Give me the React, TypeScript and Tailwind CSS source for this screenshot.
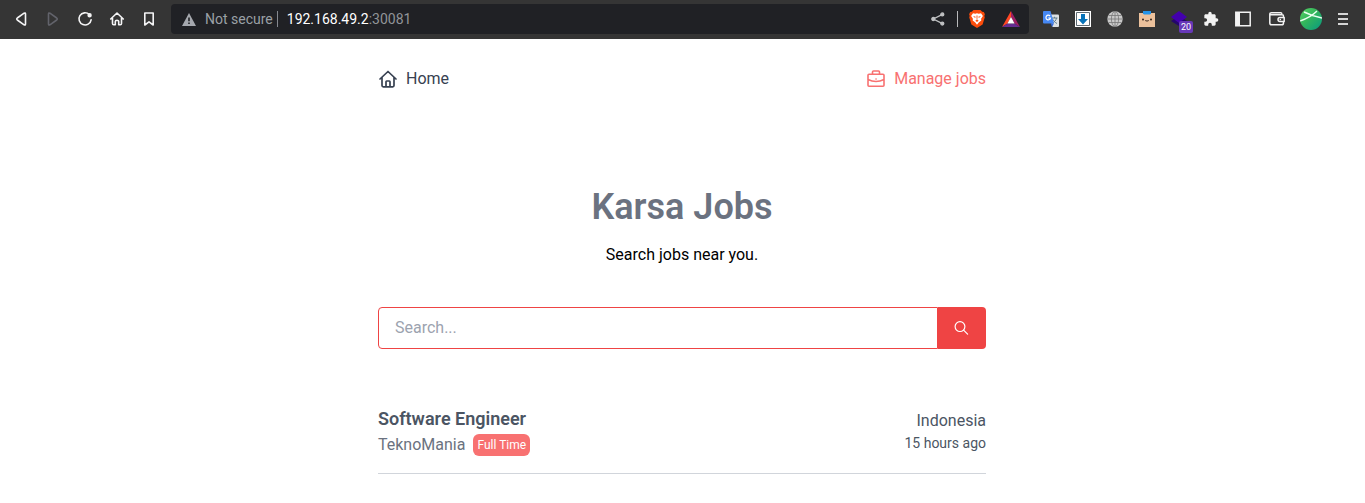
import React from "react";

const stroke = {
  fill: "none",
  stroke: "currentColor",
  strokeLinecap: "round",
  strokeLinejoin: "round",
} as const;

function NavButton({ label, dim, children }: { label: string; dim?: boolean; children: React.ReactNode }) {
  return (
    <button aria-label={label} className={dim ? "text-[#62636b]" : "text-[#f4f4f5]"}>
      <svg viewBox="0 0 16 16" className="size-4" strokeWidth="1.6" {...stroke}>
        {children}
      </svg>
    </button>
  );
}

function BraveIcon() {
  return (
    <svg viewBox="0 0 16 18" className="h-[18px] w-4">
      <path d="M4.500 0h7l1.700 1.800 1.600.2 1.100 2.300-.6 1.600.5 1.300-2.200 7.200L8 18l-5.600-3.600L.2 7.200l.5-1.300L.1 4.300 1.200 2l1.600-.2z" fill="#fb4c0b" />
      <path d="M4 3.300l2.300.5L8 3.200l1.700.6 2.300-.5 1.900 2.600-1.800 2.900.2 1.700-2.600 1.900L8 14.800l-1.700-2.400-2.600-1.900.2-1.700L2.100 5.900z" fill="#fff" />
      <path d="M4 6l2.700.7-.6 1.300zM12 6l-2.700.7.6 1.300zM7.500 5.500h1l-.2 4.200 1.400 1L8 11.900l-1.700-1.200 1.400-1z" fill="#fb4c0b" />
    </svg>
  );
}

function BatIcon() {
  return (
    <svg viewBox="0 0 18 16" className="h-4 w-[18px]">
      <path d="M9 0L0 16l5.500-3.600L9 6z" fill="#ff4724" />
      <path d="M9 0l9 16-5.500-3.600L9 6z" fill="#9e1f63" />
      <path d="M0 16h18l-5.500-3.600h-7z" fill="#662d91" />
      <path d="M9 6l3.600 6.400H5.400z" fill="#fff" />
    </svg>
  );
}

function TranslateIcon() {
  return (
    <svg viewBox="0 0 16 16" className="size-4">
      <path d="M6 3.500h9a1 1 0 011 1V15a1 1 0 01-1 1H9.500z" fill="#dce0e3" />
      <path d="M8.500 7h6M11.500 5.800V7M13.500 7c-.5 2.500-2 4-4 5M10 8.500c1 2 2.200 3 4 4" fill="none" stroke="#607d8b" />
      <path d="M1 0h6.500L11 12.500H1a1 1 0 01-1-1V1a1 1 0 011-1z" fill="#4688f4" />
      <path d="M7.800 12.500H11L9 16z" fill="#3367d6" />
      <path d="M7 5A2.300 2.300 0 107.500 7H5.300" fill="none" stroke="#fff" strokeWidth="1.200" />
    </svg>
  );
}

function DownloadIcon() {
  return (
    <svg viewBox="0 0 16 16" className="size-4">
      <path d="M0 0h16v16H0z" fill="#fff" />
      <path d="M1.500 1.500h13v13h-13z" fill="#fff" stroke="#5f6b73" />
      <path d="M6 3h4v5h3l-5 5.500L3 8h3z" fill="#0873b9" />
    </svg>
  );
}

function GlobeIcon() {
  return (
    <svg viewBox="0 0 16 16" className="size-4">
      <circle cx="8" cy="8" r="7.700" fill="#c8c8c8" />
      <g fill="none" stroke="#777" strokeWidth=".8">
        <ellipse cx="8" cy="8" rx="3.600" ry="7.500" />
        <path d="M8 .5v15M.5 8h15M1.500 4.500h13M1.500 11.500h13" />
      </g>
    </svg>
  );
}

function BoxFaceIcon() {
  return (
    <svg viewBox="0 0 16 16" className="size-4">
      <path d="M0 2h16v14H0z" fill="#ecc19c" />
      <path d="M4 0h8v2.500l-1 1H5l-1-1z" fill="#2493e8" />
      <circle cx="4" cy="8.500" r="1" fill="#30211b" />
      <circle cx="12" cy="8.500" r="1" fill="#30211b" />
      <path d="M6.300 9.500q.9 1.200 1.700 0 .8 1.200 1.700 0" fill="none" stroke="#30211b" />
    </svg>
  );
}

function LayersIcon() {
  return (
    <svg viewBox="0 0 16 16" className="size-4">
      <path d="M0 10l8-5 8 5-8 5z" fill="#24066b" />
      <path d="M0 6l8-6 8 6-8 6z" fill="#4300ad" />
    </svg>
  );
}

function AvatarIcon() {
  return (
    <svg viewBox="0 0 22 22" className="size-[22px]">
      <defs>
        <linearGradient id="avatar" x1="0" y1="0" x2="1" y2="1">
          <stop stopColor="#57d163" />
          <stop offset=".45" stopColor="#32b55c" />
          <stop offset="1" stopColor="#079981" />
        </linearGradient>
        <clipPath id="round">
          <circle cx="11" cy="11" r="11" />
        </clipPath>
      </defs>
      <g clipPath="url(#round)">
        <path d="M0 0h22v22H0z" fill="url(#avatar)" />
        <path d="M0 13C6 11 12 8 17 3M4 4c5 2.500 10 4.500 18 6" fill="none" stroke="#e9fff0" strokeWidth="1.400" />
      </g>
    </svg>
  );
}

function BrowserBar() {
  return (
    <header className="flex h-[39px] items-center bg-[#353535] pr-4 pb-px pl-[13px]">
      <div className="flex gap-4">
        <NavButton label="Back">
          <path d="M12.500 3v10q0 1.500-1.400.8L4.300 9q-1.200-1 0-2l6.800-4.800q1.400-.7 1.400.8z" />
        </NavButton>
        <NavButton label="Forward" dim>
          <path d="M3.500 3v10q0 1.500 1.400.8L11.700 9q1.200-1 0-2L4.900 2.200Q3.500 1.500 3.500 3z" />
        </NavButton>
        <NavButton label="Reload">
          <path d="M12.300 3.500A6.100 6.100 0 1014.100 8.800" />
          <circle cx="12.600" cy="4.200" r="1.400" fill="currentColor" />
        </NavButton>
        <NavButton label="Home page">
          <path d="M1.700 8L8 2l6.300 6M3.500 7v5.500q0 1.300 1.200 1.300h1.600v-3.300q0-1.200 1.700-1.200t1.700 1.200v3.300h1.600q1.200 0 1.200-1.300V7" />
        </NavButton>
        <NavButton label="Bookmark">
          <path d="M3.800 2h8.400v12L8 10.800 3.800 14z" />
        </NavButton>
      </div>

      <div className="ml-[14px] flex h-[30px] min-w-0 flex-1 items-center rounded bg-[#202125] pr-[9px] pl-[11px] text-sm">
        <svg viewBox="0 0 14 13" className="h-[13px] w-[14px] shrink-0">
          <path d="M7 0l7 13H0z" fill="#a5a8ae" />
          <path d="M6.200 4.500h1.600v3.800H6.200zm0 5h1.600v1.600H6.200z" fill="#202125" />
        </svg>
        <span className="ml-[9px] whitespace-nowrap text-[#9aa0a6]">Not secure</span>
        <span className="ml-1 h-4 w-px bg-[#85888e]" />
        <span className="ml-[9px] flex-1 text-white">
          192.168.49.2<span className="text-[#919498]">:30081</span>
        </span>
        <button aria-label="Share">
          <svg viewBox="0 0 14 14" className="h-[14px] w-[14px]" fill="#bfc0c2" stroke="#bfc0c2" strokeWidth="1.300">
            <path d="M11.500 2.300L2.300 7l9.200 4.700" fill="none" />
            <circle cx="11.300" cy="2.400" r="1.500" />
            <circle cx="2.300" cy="7" r="1.500" />
            <circle cx="11.300" cy="11.600" r="1.500" />
          </svg>
        </button>
        <span className="mr-[11px] ml-3 h-4 w-px bg-[#b8b9bb]" />
        <button aria-label="Brave Shields"><BraveIcon /></button>
        <button aria-label="Brave Rewards" className="ml-[17px]"><BatIcon /></button>
      </div>

      <div className="ml-[14px] flex items-center gap-4 text-[#f2f2f2]">
        <button aria-label="Translate"><TranslateIcon /></button>
        <button aria-label="Download manager"><DownloadIcon /></button>
        <button aria-label="Web"><GlobeIcon /></button>
        <button aria-label="Box"><BoxFaceIcon /></button>
        <button aria-label="Layers" className="relative">
          <LayersIcon />
          <span className="absolute top-[10px] left-2 rounded-xs bg-[#6738b8] px-0.5 text-[9px] leading-3 text-white">20</span>
        </button>
        <button aria-label="Extensions">
          <svg viewBox="0 0 24 24" className="size-4" fill="currentColor">
            <path d="M20.500 11H19V7c0-1.100-.9-2-2-2h-4V3.500a2.500 2.500 0 00-5 0V5H4c-1.100 0-2 .9-2 2v3.800h1.500a2.700 2.700 0 010 5.400H2V20c0 1.100.9 2 2 2h3.800v-1.500a2.700 2.700 0 015.400 0V22H17c1.100 0 2-.9 2-2v-4h1.500a2.500 2.500 0 000-5z" />
          </svg>
        </button>
        <button aria-label="Sidebar">
          <svg viewBox="0 0 16 16" className="size-4">
            <path d="M.8 1.300h14.400v13.400H.8z" fill="none" stroke="currentColor" strokeWidth="1.500" />
            <path d="M1 1.500h4v13H1z" fill="currentColor" />
          </svg>
        </button>
        <button aria-label="Wallet">
          <svg viewBox="0 0 16 16" className="ml-[2px] size-4" strokeWidth="1.500" {...stroke}>
            <path d="M14.500 5.500V5q0-1.300-1.300-1.300H2.500Q.8 3.700.8 2.700t1.700-1h9.300q1 0 1 1M.8 3v9q0 1.800 1.800 1.800h10.100q1.800 0 1.800-1.800v-.7M15.200 6.500H11a2 2 0 000 4h4.200zM11.200 8.500h.2" />
          </svg>
        </button>
        <button aria-label="Profile" className="-mx-px"><AvatarIcon /></button>
        <button aria-label="Menu">
          <svg viewBox="0 0 12 14" className="h-[14px] w-3" stroke="#d5d5d5" strokeWidth="2">
            <path d="M1 2h10M1 7h10M1 12h10" />
          </svg>
        </button>
      </div>
    </header>
  );
}

export default function App() {
  return (
    <div className="min-h-screen bg-white font-['Roboto','Liberation_Sans',sans-serif]">
      <BrowserBar />
      <div className="pr-px">
        <div className="mx-auto max-w-2xl px-8">
          <nav className="flex items-center justify-between pt-7">
            <a href="#" className="flex items-center gap-2 text-[#374151]">
              <svg viewBox="0 0 20 20" className="size-5" strokeWidth="1.700" {...stroke}>
                <path d="M2 10l8-7.500 8 7.500M4 8.500v8q0 1.300 1.300 1.300h9.400q1.300 0 1.300-1.300v-8M8 17.500v-4.800q0-.7.700-.7h2.600q.7 0 .7.700v4.800" />
              </svg>
              Home
            </a>
            <a href="#jobs" className="flex items-center gap-2 text-[#f87171]">
              <svg viewBox="0 0 20 20" className="size-5" strokeWidth="1.600" {...stroke}>
                <path d="M3 5.200h14q1 0 1 1v10q0 1-1 1H3q-1 0-1-1v-10q0-1 1-1zM6.500 5V3q0-1 1-1h5q1 0 1 1v2M2 10.500q8 4 16 0M10 10h.1" />
              </svg>
              Manage jobs
            </a>
          </nav>

          <main>
            <div className="mt-24 text-center">
              <h1 className="text-4xl font-semibold text-[#6b7280]">Karsa Jobs</h1>
              <p className="mt-4 text-black">Search jobs near you.</p>
            </div>

            <form className="mt-10 flex h-[42px]" onSubmit={(e) => e.preventDefault()}>
              <input
                type="text"
                aria-label="Search jobs"
                placeholder="Search..."
                className="min-w-0 flex-1 rounded-l-sm border border-[#ef4444] px-4 text-[#374151] outline-none placeholder:text-[#9ca3af]"
              />
              <button aria-label="Search" className="flex w-12 items-center justify-center rounded-r bg-[#ef4444] text-white">
                <svg viewBox="0 0 16 16" className="size-4" strokeWidth="1.200" {...stroke}>
                  <circle cx="6" cy="6.600" r="4.900" />
                  <path d="M9.600 10.200l4 4" />
                </svg>
              </button>
            </form>

            <ul id="jobs" className="mt-14">
              <li className="flex items-center justify-between border-b border-[#d1d5db] pb-4">
                <div>
                  <h2 className="text-lg font-semibold text-[#4b5563]">Software Engineer</h2>
                  <div className="flex items-center gap-2">
                    <span className="text-[#6b7280]">TeknoMania</span>
                    <span className="rounded-md bg-[#f87171] px-1 py-[3px] text-xs text-white">Full Time</span>
                  </div>
                </div>
                <div className="text-right text-[#4b5563]">
                  <p>Indonesia</p>
                  <p className="text-sm">15 hours ago</p>
                </div>
              </li>
            </ul>
          </main>
        </div>
      </div>
    </div>
  );
}
